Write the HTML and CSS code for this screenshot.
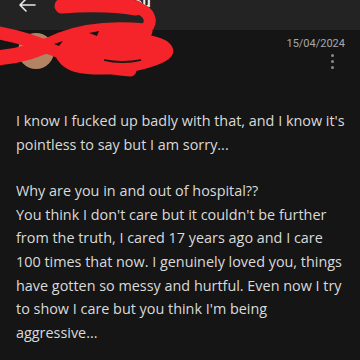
FILE: index.html
```html
<!DOCTYPE html>
<html>
<head>
<meta charset="utf-8">
<link rel="stylesheet" href="styles.css">
</head>
<body>
<div class="screen">
  <header class="topbar">
    <svg class="back" width="18" height="14" viewBox="0 0 18 14"><path d="M17 7H2M8 1L2 7l6 6" fill="none" stroke="#e8e8e8" stroke-width="1.6" stroke-linecap="round" stroke-linejoin="round"/></svg>
    <span class="name">You</span>
  </header>
  <div class="meta">
    <div class="avatar"></div>
    <div class="right">
      <span class="date">15/04/2024</span>
      <span class="dots"><i></i><i></i><i></i></span>
    </div>
  </div>
  <div class="body">
    <p>I know I fucked up badly with that, and I know it's<br>pointless to say but I am sorry...</p>
    <p>Why are you in and out of hospital??<br>You think I don't care but it couldn't be further<br>from the truth, I cared 17 years ago and I care<br>100 times that now. I genuinely loved you, things<br>have gotten so messy and hurtful. Even now I try<br>to show I care but you think I'm being<br>aggressive...</p>
  </div>
  <svg class="scribble" width="180" height="80" viewBox="0 0 180 80">
    <g fill="none" stroke="#f5242a" stroke-linecap="round" stroke-linejoin="round">
      <path d="M62,6 C90,4 118,5 136,8" stroke-width="15"/>
      <path d="M134,7 C152,11 155,26 141,31" stroke-width="12"/>
      <path d="M-6,32 C20,36 40,44 60,52 C80,60 100,68 130,70" stroke-width="13"/>
      <path d="M-6,58 C20,57 40,49 60,40 C80,32 105,27 145,31" stroke-width="15"/>
    </g>
    <path fill="#f5242a" d="M58,44 C88,32 140,28 165,40 C177,47 176,57 162,63 C140,73 100,78 75,72 C58,67 50,52 58,44 Z"/>
    <g fill="#161616">
      <path d="M54,44 L63,41 L59,46 Z"/>
      <path d="M89,33 L99,31 L97,36 Z"/>
      <path d="M104,60 C115,62 130,62 141,60 C130,63 115,63 104,60 Z" stroke="#161616" stroke-width="1.6"/>
    </g>
  </svg>
</div>
</body>
</html>
```
FILE: styles.css
```css
html, body {
  margin: 0;
  padding: 0;
  background: #151515;
}
.screen {
  position: relative;
  width: 360px;
  height: 360px;
  overflow: hidden;
  background: #151515;
  font-family: "Open Sans", "Liberation Sans", sans-serif;
}
.topbar {
  height: 30px;
  background: #232323;
  display: flex;
  align-items: flex-start;
  padding-left: 18px;
  box-sizing: border-box;
}
.back {
  margin-top: -2px;
}
.name {
  color: #eee;
  font-size: 13px;
  font-weight: 700;
  margin-left: 90px;
  margin-top: -7px;
}
.meta {
  display: flex;
  justify-content: space-between;
  padding: 3px 15px 0 18px;
  height: 60px;
  box-sizing: border-box;
}
.avatar {
  width: 36px;
  height: 36px;
  border-radius: 50%;
  background: #b38463;
  margin-top: 0;
}
.right {
  display: flex;
  flex-direction: column;
  align-items: flex-end;
}
.date {
  color: #a8a8a8;
  font-size: 11px;
  margin-top: 4px;
  font-family: "Roboto", sans-serif;
}
.dots {
  display: flex;
  flex-direction: column;
  gap: 3px;
  margin-top: 4px;
  margin-right: 11px;
}
.dots i {
  width: 3px;
  height: 3px;
  border-radius: 50%;
  background: #8a8a8a;
}
.body {
  padding: 19px 16px 0;
  color: #dadada;
  font-size: 14.4px;
  line-height: 23.7px;
  white-space: nowrap;
}
.body p {
  margin: 0 0 22.5px;
}
.scribble {
  position: absolute;
  left: 0;
  top: 0;
}
```
